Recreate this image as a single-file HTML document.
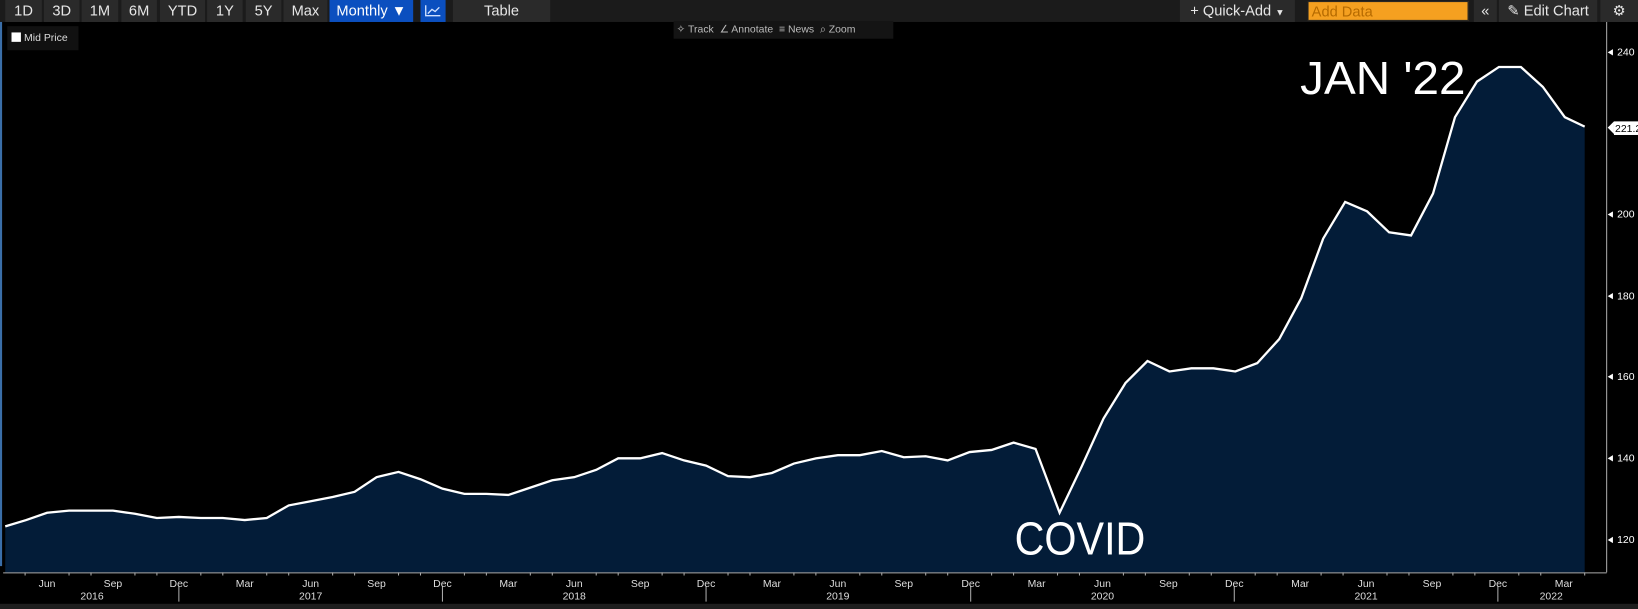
<!DOCTYPE html>
<html><head><meta charset="utf-8"><style>
html,body{margin:0;padding:0;background:#000;overflow:hidden;width:1638px;height:609px}
#w{position:absolute;left:0;top:0;width:1566px;height:582px;transform-origin:0 0;transform:scale(1.046,1.0464);font-family:"Liberation Sans",sans-serif;color:#ddd}
.bar{position:absolute;left:0;top:0;width:1566px;height:21px;background:#1b1b1b}
.b{position:absolute;top:0;height:21px;background:#2a2a2a;color:#e6e6e6;font-size:14px;line-height:21px;text-align:center}
.blue{background:#0b4fbf;color:#fff}
.t{position:absolute;font-size:10px;color:#ccc}
</style></head><body><div id="w">
<div class="bar"></div>
<div class="b" style="left:5px;width:35px">1D</div>
<div class="b" style="left:42px;width:34px">3D</div>
<div class="b" style="left:78px;width:35px">1M</div>
<div class="b" style="left:116px;width:34px">6M</div>
<div class="b" style="left:153px;width:43px">YTD</div>
<div class="b" style="left:198px;width:34px">1Y</div>
<div class="b" style="left:235px;width:34px">5Y</div>
<div class="b" style="left:271px;width:42px">Max</div>
<div class="b blue" style="left:315px;width:80px">Monthly ▼</div>
<div class="b blue" style="left:402px;width:24px"><svg width="18" height="14" viewBox="0 0 18 14" style="margin-top:3px"><path d="M2 2V12H16M4 10L8 6L11 8L15 4" stroke="#cfe0ff" stroke-width="1.3" fill="none"/></svg></div>
<div class="b" style="left:433px;width:93px">Table</div>
<div class="b" style="left:1128px;width:110px">+ Quick-Add <span style="font-size:9px">▼</span></div>
<div class="b" style="left:1250px;width:154px;top:1px;height:19px;line-height:19px;background:#f5a020;color:#b56a00;text-align:left;padding-left:3px;box-sizing:border-box;border:1px solid #222">Add Data</div>
<div class="b" style="left:1409px;width:22px">«</div>
<div class="b" style="left:1433px;width:94px">✎ Edit Chart</div>
<div class="b" style="left:1530px;width:36px">⚙</div>
<div style="position:absolute;left:0;top:21px;width:2px;height:520px;background:#3a6ea8"></div>
<div style="position:absolute;left:7px;top:25px;width:68px;height:23px;background:#111;font-size:10px;line-height:23px;color:#ddd"><span style="display:inline-block;width:9px;height:9px;background:#fff;vertical-align:-1px;margin:0 3px 0 4px"></span>Mid Price</div>
<div style="position:absolute;left:644px;top:20px;width:210px;height:17px;background:#141414;font-size:10px;line-height:17px;color:#bbb;white-space:nowrap">&nbsp;✧ Track &nbsp;∠ Annotate &nbsp;≡ News &nbsp;⌕ Zoom</div>
<svg style="position:absolute;left:0;top:0" width="1566" height="582">
<path d="M5,503 L25,497 45,490 66,488 87,488 108,488 129,491 150,495 171,494 192,495 213,495 234,497 255,495 276,483 297,479 318,475 339,470 360,456 381,451 402,458 423,467 444,472 465,472 486,473 507,466 528,459 549,456 570,449 591,438 612,438 633,433 654,440 675,445 696,455 717,456 738,452 759,443 780,438 801,435 822,435 843,431 864,437 885,436 906,440 927,432 948,430 969,423 990,429 1013,490 1034,446 1055,400 1076,366 1097,345 1118,355 1139,352 1160,352 1181,355 1202,347 1223,324 1244,285 1265,228 1286,193 1307,202 1328,222 1349,225 1370,185 1391,112 1412,78 1433,64 1454,64 1475,83 1496,112 1515,121 L1515,547 L5,547 Z" fill="#031c38"/>
<path d="M5,503 L25,497 45,490 66,488 87,488 108,488 129,491 150,495 171,494 192,495 213,495 234,497 255,495 276,483 297,479 318,475 339,470 360,456 381,451 402,458 423,467 444,472 465,472 486,473 507,466 528,459 549,456 570,449 591,438 612,438 633,433 654,440 675,445 696,455 717,456 738,452 759,443 780,438 801,435 822,435 843,431 864,437 885,436 906,440 927,432 948,430 969,423 990,429 1013,490 1034,446 1055,400 1076,366 1097,345 1118,355 1139,352 1160,352 1181,355 1202,347 1223,324 1244,285 1265,228 1286,193 1307,202 1328,222 1349,225 1370,185 1391,112 1412,78 1433,64 1454,64 1475,83 1496,112 1515,121" fill="none" stroke="#fff" stroke-width="2.2"/>
<line x1="1536" y1="21" x2="1536" y2="547" stroke="#aaa"/>
<line x1="3" y1="547.5" x2="1536" y2="547.5" stroke="#aaa"/>
<g fill="#fff" font-size="10" font-family="Liberation Sans">
<text x="1546" y="53">240</text><text x="1546" y="208">200</text><text x="1546" y="286">180</text><text x="1546" y="363">160</text><text x="1546" y="441">140</text><text x="1546" y="519">120</text>
</g>
<path d="M1537,516 l5,-3 v6z M1537,438 l5,-3 v6z M1537,360 l5,-3 v6z M1537,283 l5,-3 v6z M1537,205 l5,-3 v6z M1537,50 l5,-3 v6z" fill="#fff"/>
<rect x="1543" y="116" width="23" height="13" fill="#fff"/><path d="M1537,122 l6,-6 v12z" fill="#fff"/>
<text x="1544" y="126" font-size="10" fill="#000" font-family="Liberation Sans">221.2</text>
<g stroke="#aaa">
<path d="M24 547v3M66 547v3M87 547v3M129 547v3M150 547v3M192 547v3M213 547v3M255 547v3M276 547v3M318 547v3M339 547v3M381 547v3M402 547v3M444 547v3M465 547v3M507 547v3M528 547v3M570 547v3M591 547v3M633 547v3M654 547v3M696 547v3M717 547v3M759 547v3M780 547v3M822 547v3M843 547v3M885 547v3M906 547v3M948 547v3M969 547v3M1011 547v3M1032 547v3M1074 547v3M1095 547v3M1137 547v3M1158 547v3M1200 547v3M1221 547v3M1263 547v3M1284 547v3M1326 547v3M1347 547v3M1389 547v3M1410 547v3M1452 547v3M1473 547v3M1515 547v3"/>
<path d="M171 560v15M423 560v15M675 560v15M928 560v15M1180 560v15M1432 560v15"/>
</g>
<g fill="#ddd" font-size="10" text-anchor="middle" font-family="Liberation Sans">
<text x="45" y="561">Jun</text><text x="108" y="561">Sep</text><text x="171" y="561">Dec</text><text x="234" y="561">Mar</text><text x="297" y="561">Jun</text><text x="360" y="561">Sep</text><text x="423" y="561">Dec</text><text x="486" y="561">Mar</text><text x="549" y="561">Jun</text><text x="612" y="561">Sep</text><text x="675" y="561">Dec</text><text x="738" y="561">Mar</text><text x="801" y="561">Jun</text><text x="864" y="561">Sep</text><text x="928" y="561">Dec</text><text x="991" y="561">Mar</text><text x="1054" y="561">Jun</text><text x="1117" y="561">Sep</text><text x="1180" y="561">Dec</text><text x="1243" y="561">Mar</text><text x="1306" y="561">Jun</text><text x="1369" y="561">Sep</text><text x="1432" y="561">Dec</text><text x="1495" y="561">Mar</text>
<text x="88" y="573">2016</text><text x="297" y="573">2017</text><text x="549" y="573">2018</text><text x="801" y="573">2019</text><text x="1054" y="573">2020</text><text x="1306" y="573">2021</text><text x="1483" y="573">2022</text>
</g>
<rect x="0" y="577" width="1566" height="5" fill="#1e1e1e"/>
<text x="970" y="530" font-size="44" fill="#fff" font-family="Liberation Sans" textLength="125" lengthAdjust="spacingAndGlyphs">COVID</text>
<text x="1243" y="90" font-size="44" fill="#fff" font-family="Liberation Sans" textLength="158" lengthAdjust="spacingAndGlyphs">JAN '22</text>
</svg>
</div></body></html>
